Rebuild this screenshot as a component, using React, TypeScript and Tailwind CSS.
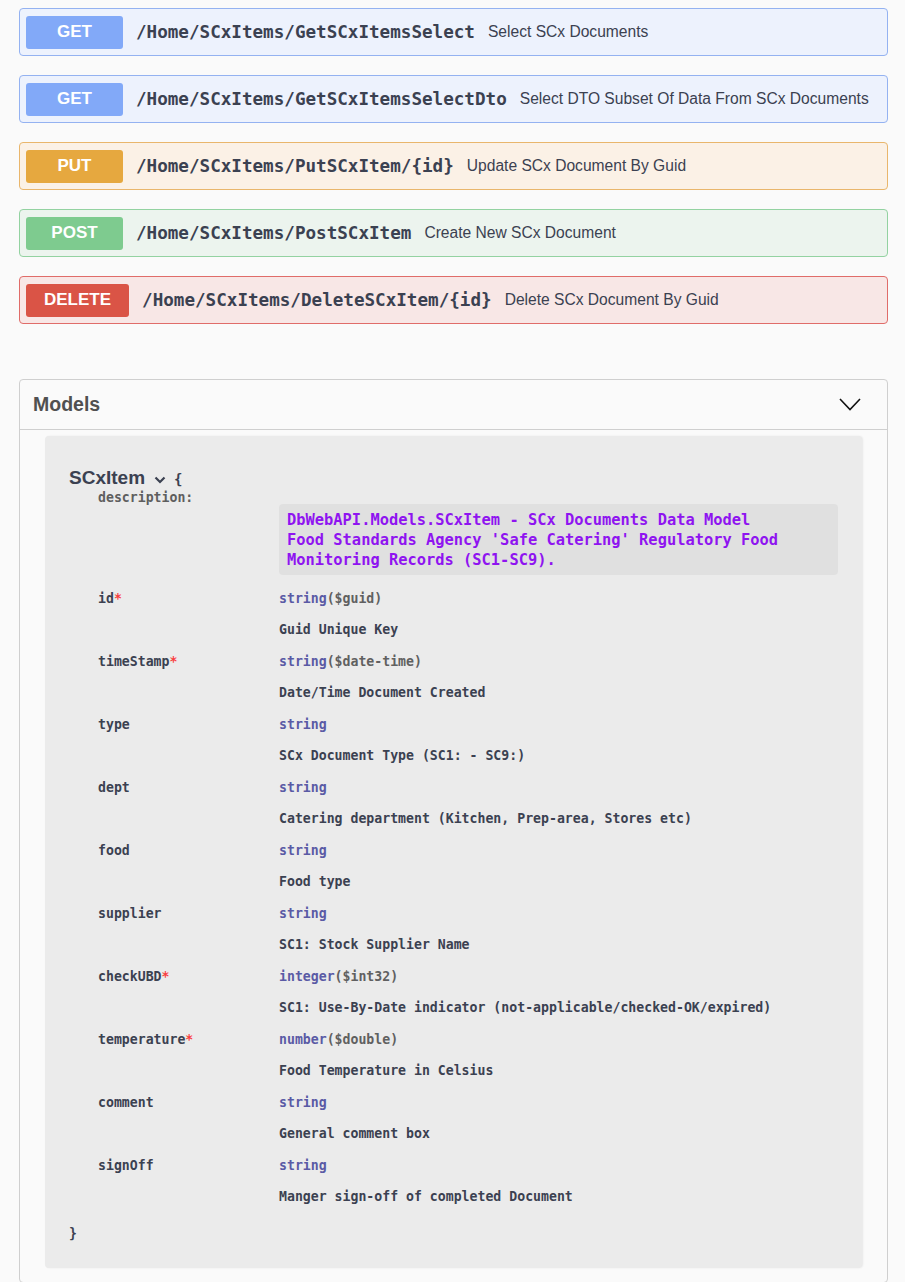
import React from 'react';

type Op = {
    method: string;
    path: string;
    summary: string;
    badge: string;
    row: string;
};

const ops: Op[] = [
    { method: 'GET', path: '/Home/SCxItems/GetSCxItemsSelect', summary: 'Select SCx Documents', badge: 'bg-[#82a9f8]', row: 'bg-[#edf2fd] border-[#94b2f1]' },
    { method: 'GET', path: '/Home/SCxItems/GetSCxItemsSelectDto', summary: 'Select DTO Subset Of Data From SCx Documents', badge: 'bg-[#82a9f8]', row: 'bg-[#edf2fd] border-[#94b2f1]' },
    { method: 'PUT', path: '/Home/SCxItems/PutSCxItem/{id}', summary: 'Update SCx Document By Guid', badge: 'bg-[#e6a83f]', row: 'bg-[#fbf1e6] border-[#e9b66c]' },
    { method: 'POST', path: '/Home/SCxItems/PostSCxItem', summary: 'Create New SCx Document', badge: 'bg-[#7ecb8f]', row: 'bg-[#ecf4ee] border-[#93d2a1]' },
    { method: 'DELETE', path: '/Home/SCxItems/DeleteSCxItem/{id}', summary: 'Delete SCx Document By Guid', badge: 'bg-[#da5446]', row: 'bg-[#f8e7e6] border-[#e06c69]' },
];

type Prop = { name: string; required?: boolean; type: string; format?: string; desc: string };

const props: Prop[] = [
    { name: 'id', required: true, type: 'string', format: '($guid)', desc: 'Guid Unique Key' },
    { name: 'timeStamp', required: true, type: 'string', format: '($date-time)', desc: 'Date/Time Document Created' },
    { name: 'type', type: 'string', desc: 'SCx Document Type (SC1: - SC9:)' },
    { name: 'dept', type: 'string', desc: 'Catering department (Kitchen, Prep-area, Stores etc)' },
    { name: 'food', type: 'string', desc: 'Food type' },
    { name: 'supplier', type: 'string', desc: 'SC1: Stock Supplier Name' },
    { name: 'checkUBD', required: true, type: 'integer', format: '($int32)', desc: 'SC1: Use-By-Date indicator (not-applicable/checked-OK/expired)' },
    { name: 'temperature', required: true, type: 'number', format: '($double)', desc: 'Food Temperature in Celsius' },
    { name: 'comment', type: 'string', desc: 'General comment box' },
    { name: 'signOff', type: 'string', desc: 'Manger sign-off of completed Document' },
];

const sans = "font-['Liberation_Sans',Arial,sans-serif]";
const mono = "font-['DejaVu_Sans_Mono','Liberation_Mono',monospace]";

const OpRow = ({ op }: { op: Op }) => (
    <div className={`flex items-center h-[48px] border rounded-[4px] mb-[19px] ${op.row}`}>
        <div className={`ml-[6px] h-[33px] min-w-[97px] px-[18px] rounded-[3px] flex items-center justify-center text-white font-bold text-[17px] ${sans} ${op.badge}`}>
            {op.method}
        </div>
        <span className={`ml-[13px] text-[17.6px] font-bold text-[#3b4151] ${mono}`}>{op.path}</span>
        <span className={`ml-[13px] text-[15.6px] text-[#3b4151] ${sans}`}>{op.summary}</span>
    </div>
);

export default function App() {
    return (
        <div className="min-h-[1282px] bg-[#fafafa] pl-[19px] pr-[17px] pt-[8px]">
            {ops.map((op, i) => (
                <OpRow key={i} op={op} />
            ))}

            {/* Models section */}
            <div className="mt-[55px] border border-[#cfcfcf] rounded-[4px] bg-[#fafafa]">
                <div className="h-[50px] flex items-center justify-between pl-[13px] pr-[26px] border-b border-[#cfcfcf]">
                    <span className={`text-[19.5px] font-bold text-[#505050] ${sans}`}>Models</span>
                    <svg width="22" height="13" viewBox="0 0 22 13" fill="none">
                        <polyline points="1,1 11,11.5 21,1" stroke="#111" strokeWidth="1.6" />
                    </svg>
                </div>

                <div className="mx-[25px] mt-[6px] mb-[14px] bg-[#ebebeb] rounded-[4px] shadow-[1px_0_2px_rgba(0,0,0,0.08)] pl-[24px] pr-[24px] pt-[30px] pb-[22px]">
                    <div className="flex items-center h-[24px]">
                        <span className={`text-[19px] font-bold text-[#3b4151] ${sans}`}>SCxItem</span>
                        <svg className="ml-[9px] mt-[3px]" width="12" height="8" viewBox="0 0 12 8" fill="none">
                            <polyline points="1.5,1.5 6,6 10.5,1.5" stroke="#3b4151" strokeWidth="2.2" />
                        </svg>
                        <span className={`ml-[8px] mt-[3px] text-[14px] font-bold text-[#3b4151] ${mono}`}>{'{'}</span>
                    </div>

                    <div className={`grid grid-cols-[181px_1fr] pl-[29px] pt-[4px] ${mono} text-[13.2px] font-bold`}>
                        <div className="h-[16px] leading-[16px] text-[#5e5e5e] -mt-[4px]">description:</div>
                        <div className="mt-[10px] bg-[#e0e0e0] rounded-[4px] px-[8px] pt-[6px] pb-[5px] text-[15.4px] leading-[20px] text-[#8f14f0]">
                            <div>DbWebAPI.Models.SCxItem - SCx Documents Data Model</div>
                            <div>Food Standards Agency 'Safe Catering' Regulatory Food</div>
                            <div>Monitoring Records (SC1-SC9).</div>
                        </div>
                    </div>

                    <div className={`mt-[8px] pl-[29px] ${mono} text-[13.2px] font-bold text-[#3b4151]`}>
                        {props.map((p) => (
                            <div key={p.name} className="grid grid-cols-[181px_1fr]">
                                <div className="h-[31px] flex items-center">
                                    {p.name}
                                    {p.required && <span className="text-[#f93e3e]">*</span>}
                                </div>
                                <div className="h-[31px] flex items-center text-[#5a5aa5]">
                                    {p.type}
                                    {p.format && <span className="text-[#606060]">{p.format}</span>}
                                </div>
                                <div className="h-[32px]" />
                                <div className="h-[32px] flex items-center">{p.desc}</div>
                            </div>
                        ))}
                        <div className="h-[24px] flex items-center -ml-[29px] mt-[9px]">{'}'}</div>
                    </div>
                </div>
            </div>
        </div>
    );
}
